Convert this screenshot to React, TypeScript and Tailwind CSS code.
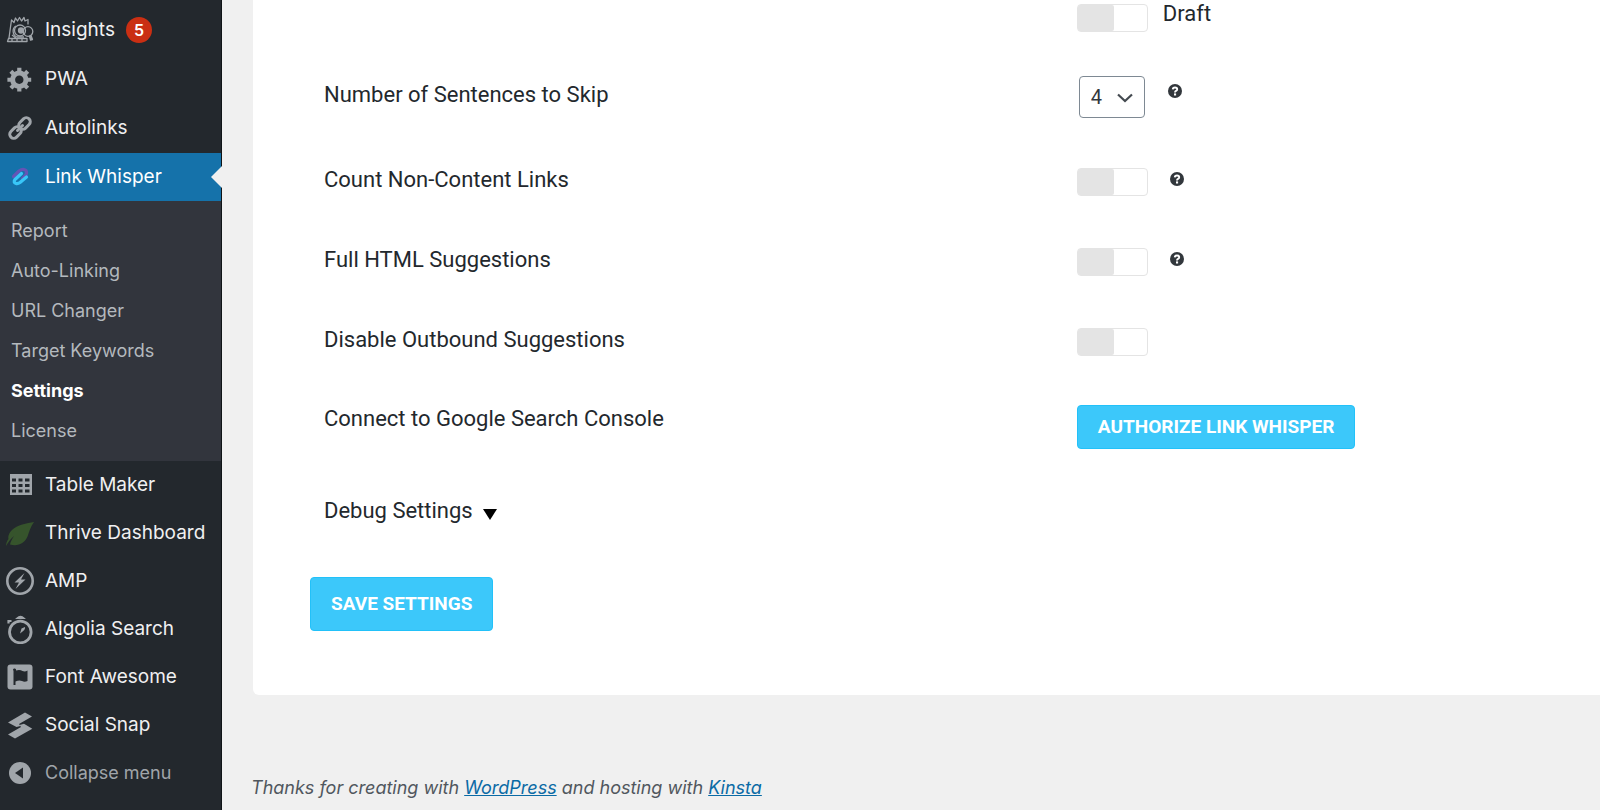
import React from "react";

type IconProps = { className?: string };

function InsightsIcon() {
  return (
    <svg viewBox="0 0 28 28" className="size-7" fill="none" stroke="currentColor" strokeWidth="1.3" strokeLinejoin="round" aria-hidden="true">
      <path d="M3 22 L4.500 11 L5.500 4 L8 6.500 L9.500 2 L11.500 5 L13.500 1.500 L15.500 5 L18 1.500 L19 5 L22 3.500 L22 8.500" />
      <path d="M1.500 25.500 H21 V22.500 H2.500 Z M6 22.500 V25 M11 22.500 V25 M16 22.500 V25 M6 19 L10 22" />
      <path d="M10 10 C6 12 6 19 11 21 H18" />
      <circle cx="14" cy="14.500" r="5.500" />
      <circle cx="15" cy="14.500" r="2.500" fill="currentColor" />
      <circle cx="22" cy="15.500" r="4.800" />
      <path d="M23.500 20 L24.500 24 L26.500 23.500 L25 19.500 Z" fill="currentColor" />
    </svg>
  );
}

function GearIcon() {
  return (
    <svg viewBox="0 0 20 20" className="size-7" fill="currentColor" aria-hidden="true">
      <path d="M18 12h-2.18c-.17.7-.44 1.35-.81 1.93l1.54 1.54-2.1 2.1-1.54-1.54c-.58.36-1.23.63-1.91.79V19H8v-2.18c-.68-.16-1.33-.43-1.91-.79l-1.54 1.54-2.12-2.12 1.54-1.54c-.36-.58-.63-1.23-.79-1.91H1V9.03h2.17c.16-.7.44-1.35.8-1.94L2.43 5.55l2.1-2.1 1.54 1.54c.58-.37 1.24-.64 1.93-.81V2h3v2.18c.68.16 1.33.43 1.91.79l1.54-1.54 2.12 2.12-1.54 1.54c.36.59.64 1.24.8 1.94H18V12zm-8.500 1.500c1.660 0 3-1.340 3-3s-1.340-3-3-3-3 1.340-3 3 1.340 3 3 3z" />
    </svg>
  );
}

function ChainIcon() {
  return (
    <svg viewBox="0 0 28 28" className="size-7" fill="none" stroke="currentColor" strokeWidth="3" strokeLinecap="round" aria-hidden="true">
      <rect x="-6.500" y="-4" width="13" height="8" rx="4" transform="translate(18.500 9.500) rotate(-45)" />
      <rect x="-6.500" y="-4" width="13" height="8" rx="4" transform="translate(9.500 18.500) rotate(-45)" />
      <path d="M11.500 16.500 L16.500 11.500" />
    </svg>
  );
}

function WhisperIcon() {
  return (
    <svg viewBox="0 0 28 28" className="size-7" fill="none" strokeWidth="3.200" strokeLinecap="round" strokeLinejoin="round" aria-hidden="true">
      <path d="M7.500 13.500 L13 8 Q17 5 20 7.500 Q21.500 10.500 19 13 L16.500 15.500" stroke="#6554b5" />
      <path d="M15.500 10.500 L9 16.500 Q7 19.500 10 20.500 Q12 21 14 19.500 L20.500 14" stroke="#38c6f8" />
    </svg>
  );
}

function TableIcon() {
  return (
    <svg viewBox="0 0 28 28" className="size-7" aria-hidden="true">
      <path fill="currentColor" fillRule="evenodd" d="M4 3h22v21H4zM6 7.500v3h4v-3zM12.500 7.500v3h4v-3zM19 7.500v3h4.500v-3zM6 13v3h4v-3zM12.500 13v3h4v-3zM19 13v3h4.500v-3zM6 18.500v3h4v-3zM12.500 18.500v3h4v-3zM19 18.500v3h4.500v-3z" />
    </svg>
  );
}

function LeafIcon() {
  return (
    <svg viewBox="0 0 28 28" className="size-7" aria-hidden="true">
      <path fill="#36542c" d="M28 3 C21 4 11 6 6 11 C2.500 14.500 2 17.500 2.500 20 C1 22 0 24.500 0 27 C2 24 4 20 8 17 C6 20 4.500 23 4 25.500 C12 28 19 24 21.500 17.500 C23.500 12 24.500 8 28 3 Z" />
    </svg>
  );
}

function AmpIcon() {
  return (
    <svg viewBox="0 0 28 28" className="size-7" aria-hidden="true">
      <circle cx="14" cy="14" r="12.700" fill="none" stroke="currentColor" strokeWidth="2.600" />
      <path fill="currentColor" d="M18.500 6 L8.500 15.500 H13 L9.500 22 L19.500 12.500 H15 Z" />
    </svg>
  );
}

function StopwatchIcon() {
  return (
    <svg viewBox="0 0 28 30" className="h-[30px] w-7" fill="none" stroke="currentColor" aria-hidden="true">
      <circle cx="14.300" cy="18" r="10.800" strokeWidth="2.800" />
      <path d="M11 4.200 Q14.500 1 18 4.200 Z" fill="currentColor" strokeWidth="1.500" />
      <path d="M2.500 9.500 V7 H5.500" strokeWidth="2.200" />
      <path d="M14 19.500 L15.500 14.500 L19 13 Q20 15.500 14 19.500 Z" fill="currentColor" stroke="none" />
    </svg>
  );
}

function FlagIcon() {
  return (
    <svg viewBox="0 0 28 28" className="size-7" aria-hidden="true">
      <rect x="1.500" y="1.500" width="25" height="25" rx="3" fill="currentColor" />
      <path fill="#23282d" d="M7 6.500 a1.500 1.500 0 0 1 3 1 Q14 6.500 16.500 8 Q19 9 21.500 7.500 V18 Q18.500 19.500 16 18 Q13 17 9.500 18.500 V22 H7.500 V8 Z" />
    </svg>
  );
}

function SnapIcon() {
  return (
    <svg viewBox="0 0 28 28" className="size-7" fill="currentColor" aria-hidden="true">
      <path d="M19 1.500 L26 5.500 L13 13 L14.500 15 L10.500 16 L2 11.500 Z" />
      <path d="M9 27.500 L2 23.500 L15 16 L13.500 14 L18 12.800 L26.300 17.700 Z" />
    </svg>
  );
}

function CollapseIcon() {
  return (
    <svg viewBox="0 0 28 28" className="size-7" aria-hidden="true">
      <circle cx="14" cy="14" r="11" fill="currentColor" />
      <path d="M17 8.500 V19.500 L9 14 Z" fill="#23282d" />
    </svg>
  );
}

function HelpIcon({ className = "" }: IconProps) {
  return (
    <button type="button" aria-label="Help" className={className}>
      <svg viewBox="0 0 14 14" className="size-3.5" aria-hidden="true">
        <circle cx="7" cy="7" r="7" fill="#32373c" />
        <path d="M4.800 5.400 Q4.900 3.500 7 3.500 Q9.200 3.500 9.200 5.200 Q9.200 6.300 8 6.900 Q7 7.400 7 8.400" fill="none" stroke="#fff" strokeWidth="1.900" />
        <rect x="6" y="9.400" width="2.100" height="2.100" fill="#fff" />
      </svg>
    </button>
  );
}

function MenuItem({ icon, label, children }: { icon: React.ReactNode; label: string; children?: React.ReactNode }) {
  return (
    <li>
      <a href="#" className="flex h-12 items-center gap-[11px] pl-1.5 text-[19px] whitespace-nowrap text-[#f0f0f1]">
        <span className="text-[#a0a5aa]">{icon}</span>
        {label}
        {children}
      </a>
    </li>
  );
}

const submenu = ["Report", "Auto-Linking", "URL Changer", "Target Keywords", "Settings", "License"];

function Sidebar() {
  return (
    <nav className="w-[222px] shrink-0 border-r border-[#101517] bg-[#23282d] pt-1.5">
      <ul className="flex flex-col gap-px">
        <MenuItem icon={<InsightsIcon />} label="Insights">
          <span className="flex size-[26px] items-center justify-center rounded-full bg-[#ca2f13] text-base font-semibold text-white">5</span>
        </MenuItem>
        <MenuItem icon={<GearIcon />} label="PWA" />
        <MenuItem icon={<ChainIcon />} label="Autolinks" />
        <li>
          <a href="#" className="relative flex h-12 items-center gap-[11px] bg-[#1572aa] pl-1.5 text-[19px] whitespace-nowrap text-white">
            <WhisperIcon />
            Link Whisper
            <svg viewBox="0 0 11 22" className="absolute top-[13px] -right-px h-[22px] w-[11px]" aria-hidden="true">
              <path d="M11 0 V22 L0 11 Z" fill="#f0f0f0" />
            </svg>
          </a>
          <ul className="bg-[#32353d] py-2.5">
            {submenu.map((name) => (
              <li key={name}>
                <a
                  href="#"
                  className={
                    name === "Settings"
                      ? "flex h-10 items-center pl-[11px] text-lg font-bold text-white"
                      : "flex h-10 items-center pl-[11px] text-lg text-[#b4b9be]"
                  }
                >
                  {name}
                </a>
              </li>
            ))}
          </ul>
        </li>
      </ul>
      <ul>
        <MenuItem icon={<TableIcon />} label="Table Maker" />
        <MenuItem icon={<LeafIcon />} label="Thrive Dashboard" />
        <MenuItem icon={<AmpIcon />} label="AMP" />
        <MenuItem icon={<StopwatchIcon />} label="Algolia Search" />
        <MenuItem icon={<FlagIcon />} label="Font Awesome" />
        <MenuItem icon={<SnapIcon />} label="Social Snap" />
        <li>
          <button type="button" className="flex h-12 w-full items-center gap-[11px] pl-1.5 text-lg text-[#a0a5aa]">
            <CollapseIcon />
            Collapse menu
          </button>
        </li>
      </ul>
    </nav>
  );
}

function Toggle({ id }: { id: string }) {
  return (
    <input
      id={id}
      type="checkbox"
      role="switch"
      className="h-7 w-[71px] shrink-0 appearance-none rounded-sm border border-[#e4e4e4] bg-white before:block before:h-full before:w-9 before:rounded-xs before:bg-[#e4e4e4] checked:before:ml-auto"
    />
  );
}

const rowGrid = "grid grid-cols-[59%_1fr] items-start";

function ToggleRow({ id, label, help }: { id: string; label: string; help?: boolean }) {
  return (
    <div className={`${rowGrid} h-20`}>
      <label htmlFor={id} className="pt-px leading-7">{label}</label>
      <div className="flex items-start gap-[22px] pt-[3px]">
        <Toggle id={id} />
        {help && <HelpIcon className="flex pt-1" />}
      </div>
    </div>
  );
}

export default function App() {
  return (
    <div className="flex min-h-screen overflow-x-hidden bg-[#f0f0f0] font-['Inter',sans-serif]">
      <Sidebar />
      <main className="min-w-0 grow pl-[31px]">
        <form className="rounded-bl-md bg-white pb-16 pl-[71px] font-['Roboto',sans-serif] text-[22px] text-[#23282d]" onSubmit={(e) => e.preventDefault()}>
          <div className={`${rowGrid} h-[76px]`}>
            <div className="col-start-2 flex items-start gap-[15px]">
              <div className="flex pt-1">
                <Toggle id="draft" />
              </div>
              <label htmlFor="draft" className="leading-7">Draft</label>
            </div>
          </div>
          <div className={`${rowGrid} h-[89px]`}>
            <label htmlFor="skip" className="pt-[5px] leading-7">Number of Sentences to Skip</label>
            <div className="flex items-start gap-[23px]">
              <div className="relative ml-0.5">
                <select id="skip" defaultValue="4" className="h-[42px] w-[66px] appearance-none rounded-sm border border-[#7e8993] bg-white pl-[11px] text-xl text-[#32373c]">
                  <option>1</option>
                  <option>2</option>
                  <option>3</option>
                  <option>4</option>
                </select>
                <svg viewBox="0 0 16 10" className="pointer-events-none absolute top-[17px] right-3 h-2.5 w-4" fill="none" stroke="#444a50" strokeWidth="2.200" aria-hidden="true">
                  <path d="M1 1.500 L8 8 L15 1.500" />
                </svg>
              </div>
              <HelpIcon className="flex pt-2" />
            </div>
          </div>
          <ToggleRow id="non-content" label="Count Non-Content Links" help />
          <ToggleRow id="full-html" label="Full HTML Suggestions" help />
          <ToggleRow id="outbound" label="Disable Outbound Suggestions" />
          <div className={`${rowGrid} h-[92px]`}>
            <span className="leading-7">Connect to Google Search Console</span>
            <div>
              <button type="button" className="h-11 rounded-sm border border-[#22c1f9] bg-[#3cc8fa] px-5 text-[19px] font-bold whitespace-nowrap text-white">
                AUTHORIZE LINK WHISPER
              </button>
            </div>
          </div>
          <div className="h-20">
            <button type="button" className="flex items-center gap-2.5 leading-7">
              Debug Settings
              <svg viewBox="0 0 14 11" className="mt-1.5 h-[11px] w-3.5" aria-hidden="true">
                <path d="M0 0 H14 L7 11 Z" fill="#000" />
              </svg>
            </button>
          </div>
          <button type="submit" className="-ml-3.5 flex h-[54px] items-center rounded-sm border border-[#22c1f9] bg-[#3cc8fa] px-5 text-[19px] font-bold text-white">
            SAVE SETTINGS
          </button>
        </form>
        <footer className="mt-[81px] -ml-0.5 text-lg leading-6 text-[#50575e] italic">
          Thanks for creating with <a href="#" className="text-[#0a6aa5] underline">WordPress</a> and hosting with{" "}
          <a href="#" className="text-[#0a6aa5] underline">Kinsta</a>
        </footer>
      </main>
    </div>
  );
}
